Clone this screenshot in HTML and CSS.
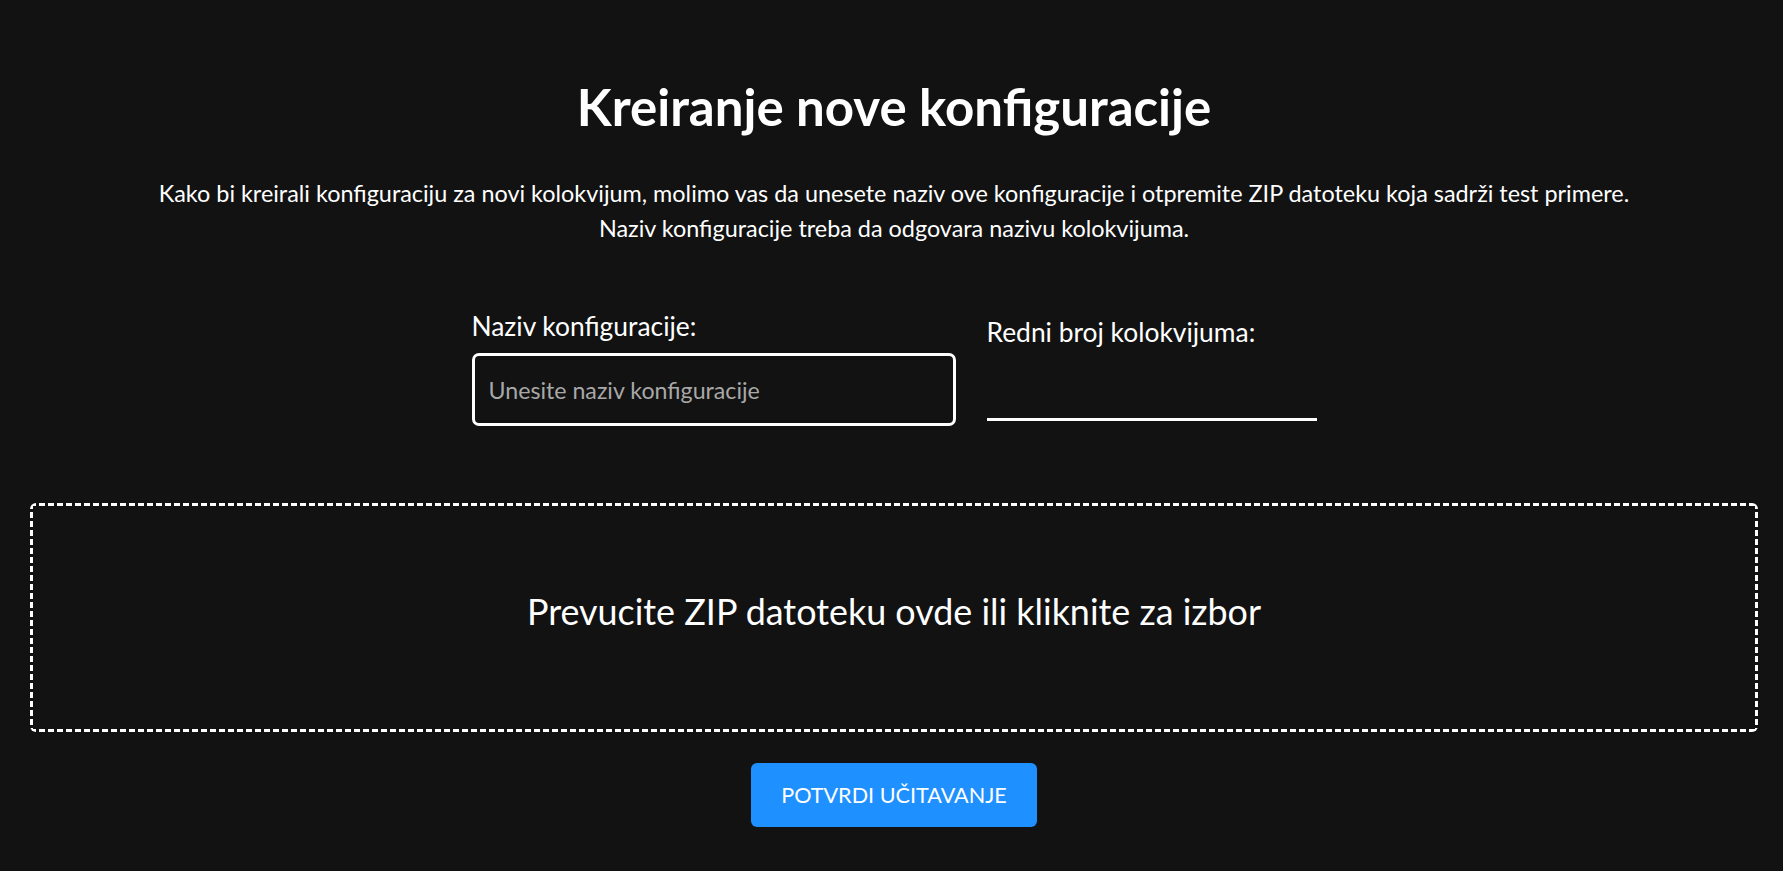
FILE: index.html
```html
<!DOCTYPE html>
<html lang="sr">
<head>
<meta charset="utf-8">
<title>Kreiranje nove konfiguracije</title>
<link rel="stylesheet" href="styles.css">
</head>
<body>
<main class="page">
  <h1 class="title">Kreiranje nove konfiguracije</h1>
  <p class="intro">Kako bi kreirali konfiguraciju za novi kolokvijum, molimo vas da unesete naziv ove konfiguracije i otpremite ZIP datoteku koja sadrži test primere.<br>Naziv konfiguracije treba da odgovara nazivu kolokvijuma.</p>
  <div class="fields">
    <label class="field">
      <span class="label">Naziv konfiguracije:</span>
      <input class="input-text" type="text" placeholder="Unesite naziv konfiguracije">
    </label>
    <label class="field">
      <span class="label">Redni broj kolokvijuma:</span>
      <input class="input-num" type="number">
    </label>
  </div>
  <div class="dropzone">Prevucite ZIP datoteku ovde ili kliknite za izbor</div>
  <div class="actions">
    <button class="btn" type="button">POTVRDI UČITAVANJE</button>
  </div>
</main>
</body>
</html>
```
FILE: styles.css
```css
html, body {
  margin: 0;
  background: #121212;
  color: #ffffff;
  font-family: "Lato", "Open Sans", sans-serif;
}

.page {
  padding: 77px 25px 40px 30px;
}

.title {
  margin: 0;
  font-size: 51px;
  line-height: 60px;
  font-weight: 700;
  text-align: center;
}

.intro {
  margin: 39px 0 0;
  font-size: 23.4px;
  line-height: 35px;
  font-weight: 400;
  text-align: center;
}

.fields {
  display: flex;
  justify-content: center;
  align-items: center;
  gap: 31px;
  margin-top: 64px;
}

.field {
  display: flex;
  flex-direction: column;
  gap: 11px;
}

.label {
  font-size: 26.4px;
  line-height: 32px;
}

.input-text {
  box-sizing: border-box;
  width: 484px;
  height: 73px;
  padding: 0 14px;
  border: 3px solid #ffffff;
  border-radius: 7px;
  background: transparent;
  color: #ffffff;
  font-family: "Lato", sans-serif;
  font-size: 23.2px;
  outline: none;
}

.input-text::placeholder {
  color: #a8a8a8;
}

.input-num {
  box-sizing: border-box;
  width: 330px;
  height: 62px;
  padding: 0;
  border: 0;
  border-bottom: 3px solid #ffffff;
  background: transparent;
  color: #ffffff;
  font-family: "Lato", sans-serif;
  font-size: 23.2px;
  outline: none;
}

.dropzone {
  box-sizing: border-box;
  height: 229px;
  margin-top: 77px;
  padding-bottom: 12px;
  border-radius: 6px;
  background:
    repeating-linear-gradient(90deg, #ffffff 0 6px, transparent 6px 9px) left top / 100% 3px no-repeat,
    repeating-linear-gradient(90deg, #ffffff 0 6px, transparent 6px 9px) left bottom / 100% 3px no-repeat,
    repeating-linear-gradient(180deg, #ffffff 0 6px, transparent 6px 9px) left top / 3px 100% no-repeat,
    repeating-linear-gradient(180deg, #ffffff 0 6px, transparent 6px 9px) right top / 3px 100% no-repeat;
  display: flex;
  align-items: center;
  justify-content: center;
  font-size: 35.9px;
  cursor: pointer;
}

.actions {
  display: flex;
  justify-content: center;
  margin-top: 31px;
}

.btn {
  height: 64px;
  padding: 0 30px;
  border: 0;
  border-radius: 6px;
  background: #1e90ff;
  color: #ffffff;
  font-family: "Lato", sans-serif;
  font-size: 21.6px;
  cursor: pointer;
}
```
